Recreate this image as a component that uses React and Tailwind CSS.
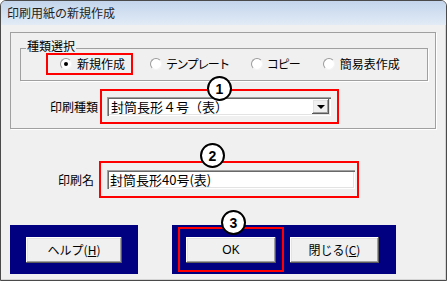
import React from "react";

const raised =
  "shadow-[inset_-1px_-1px_0_#5a5a5a,inset_1px_1px_0_#ffffff,inset_-2px_-2px_0_#a0a0a0,inset_2px_2px_0_#e3e3e3]";
const sunken =
  "shadow-[inset_1px_1px_0_#a0a0a0,inset_2px_2px_0_#696969,inset_-1px_-1px_0_#ffffff,inset_-2px_-2px_0_#e3e3e3]";

function Radio({ checked }) {
  return (
    <span className="flex h-[12px] w-[12px] shrink-0 items-center justify-center rounded-full border border-[#9a9a9a] border-r-[#f4f4f4] border-b-[#f4f4f4] bg-white">
      {checked && <span className="h-[4px] w-[4px] rounded-full bg-black" />}
    </span>
  );
}

function Callout({ n, className }) {
  return (
    <span
      className={
        "absolute flex h-[25px] w-[25px] items-center justify-center rounded-full border-2 border-black bg-white font-['Liberation_Sans',sans-serif] text-[14px] font-bold leading-none text-black " +
        className
      }
    >
      {n}
    </span>
  );
}

function Button({ children, className }) {
  return (
    <button
      className={
        "flex h-[26px] items-center justify-center bg-[#f0f0f0] text-[12px] leading-none text-black " +
        raised +
        " " +
        className
      }
    >
      {children}
    </button>
  );
}

export default function App() {
  return (
    <div className="h-[281px] w-[447px] bg-white font-['Noto_Sans_CJK_JP',sans-serif] text-black">
      <div className="flex h-full flex-col overflow-hidden rounded-t-[6px] border border-[#4a4a4a] bg-[#f0f0f0]">
        {/* title bar */}
        <div className="h-[24px] shrink-0 bg-gradient-to-b from-[#c3d5ec] to-[#e2ebf6] pl-[6px] text-[12px] leading-[24px] text-[#1e1e1e]">
          印刷用紙の新規作成
        </div>

        <div className="flex flex-1 flex-col border-r border-b border-[#d4d4d4]">
          {/* outer group */}
          <div className="ml-[9px] mt-[7px] w-[426px] border border-[#a0a0a0] pb-[4px] shadow-[1px_1px_0_#ffffff]">
            <div className="relative ml-[9px] mt-[15px] h-[33px] w-[408px] border border-[#a0a0a0] shadow-[1px_1px_0_#ffffff]">
              <span className="absolute left-[5px] top-[-10px] bg-[#f0f0f0] px-[1px] text-[12px] leading-[14px]">
                種類選択
              </span>
              <div className="mt-[4px] flex items-center text-[12px] leading-[14px]">
                <div className="ml-[25px] flex h-[22px] w-[87px] items-center border-2 border-[#ff0000] pl-[12px]">
                  <Radio checked />
                  <span className="ml-[5px]">新規作成</span>
                </div>
                <div className="ml-[17px]">
                  <Radio />
                </div>
                <span className="ml-[4px] tracking-[-1.5px]">テンプレート</span>
                <div className="ml-[22px]">
                  <Radio />
                </div>
                <span className="ml-[4px] tracking-[-1px]">コピー</span>
                <div className="ml-[23px]">
                  <Radio />
                </div>
                <span className="ml-[5px]">簡易表作成</span>
              </div>
            </div>

            <div className="mt-[8px] flex items-center">
              <span className="ml-[39px] w-[48px] text-[12px] leading-[14px]">印刷種類</span>
              <div className="relative ml-[2px] flex h-[35px] w-[239px] items-center border-2 border-[#ff0000]">
                <Callout n="1" className="left-[105px] top-[-15px]" />
                <div className={"ml-[5px] flex h-[19px] w-[224px] items-center bg-white " + sunken}>
                  <span className="pl-[4px] text-[13px] leading-none">封筒長形４号（表）</span>
                  <span className={"ml-auto mr-[2px] flex h-[15px] w-[17px] items-center justify-center bg-[#f0f0f0] " + raised}>
                    <span className="h-0 w-0 border-x-[4px] border-t-[4px] border-x-transparent border-t-black" />
                  </span>
                </div>
              </div>
            </div>
          </div>

          {/* print name */}
          <div className="mt-[32px] flex items-center">
            <span className="ml-[57px] w-[36px] text-[12px] leading-[14px]">印刷名</span>
            <div className="relative ml-[5px] flex h-[37px] w-[260px] items-center border-2 border-[#ff0000]">
              <Callout n="2" className="left-[99px] top-[-20px]" />
              <div className={"ml-[6px] flex h-[19px] w-[248px] items-center bg-white " + sunken}>
                <span className="pl-[3px] text-[13px] leading-none">封筒長形40号(表)</span>
              </div>
            </div>
          </div>

          {/* buttons */}
          <div className="ml-[9px] mt-[27px] flex">
            <div className="flex h-[49px] w-[128px] bg-[#000080] pl-[16px] pt-[12px]">
              <Button className="w-[96px]">
                <span>
                  ヘルプ(<span className="underline">H</span>)
                </span>
              </Button>
            </div>
            <div className="ml-[34px] flex h-[49px] w-[224px] bg-[#000080] pl-[6px] pt-[2px]">
              <div className="relative h-[45px] w-[106px] border-2 border-[#ff0000] pl-[6px] pt-[8px]">
                <Callout n="3" className="left-[41px] top-[-19px]" />
                <Button className="w-[90px] font-['Liberation_Sans',sans-serif]">OK</Button>
              </div>
              <div className="ml-[6px] pt-[10px]">
                <Button className="w-[89px]">
                  <span>
                    閉じる(<span className="underline">C</span>)
                  </span>
                </Button>
              </div>
            </div>
          </div>
        </div>
      </div>
    </div>
  );
}
